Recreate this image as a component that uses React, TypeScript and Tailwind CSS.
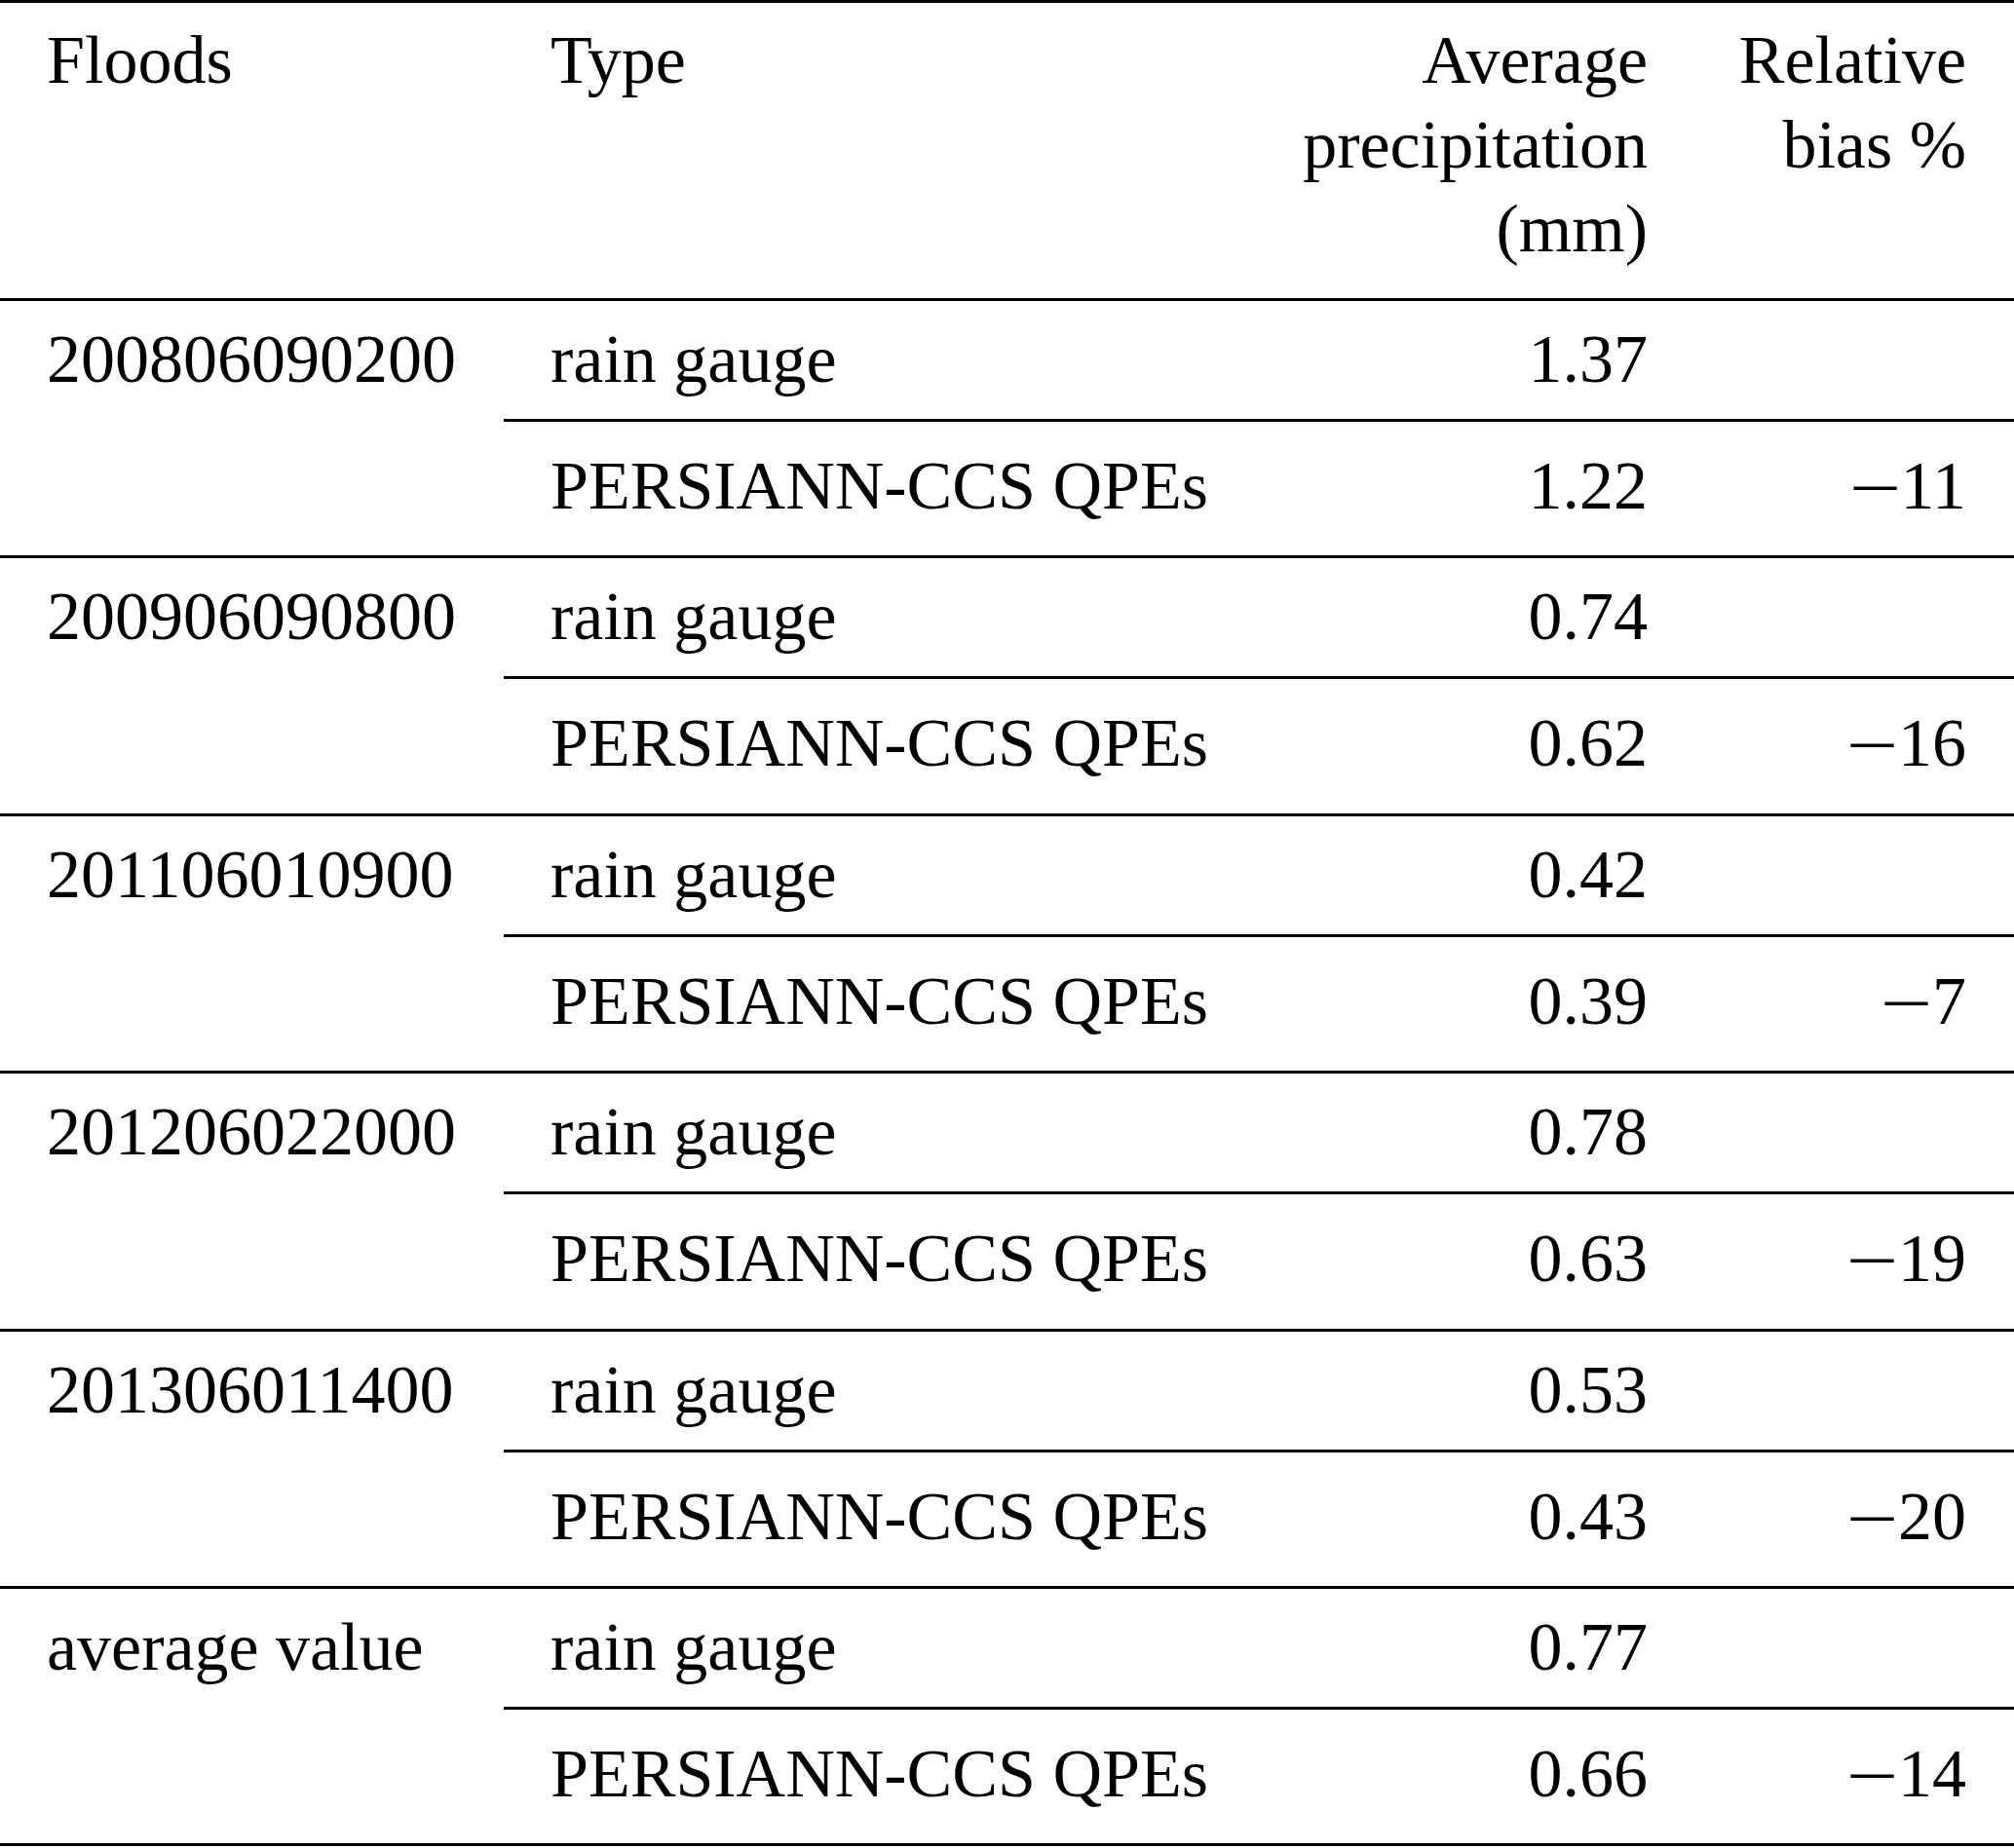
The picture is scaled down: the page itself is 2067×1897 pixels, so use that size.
const groups = [
  { flood: "200806090200", gauge: "1.37", qpe: "1.22", bias: "11" },
  { flood: "200906090800", gauge: "0.74", qpe: "0.62", bias: "16" },
  { flood: "201106010900", gauge: "0.42", qpe: "0.39", bias: "7" },
  { flood: "201206022000", gauge: "0.78", qpe: "0.63", bias: "19" },
  { flood: "201306011400", gauge: "0.53", qpe: "0.43", bias: "20" },
  { flood: "average value", gauge: "0.77", qpe: "0.66", bias: "14" },
];

// Horizontal rule across the full table
const Rule = () => <div className="h-[3px] bg-black" />;

const SubRow = ({ type, value, bias, className }: { type: string; value: string; bias?: string; className: string }) => (
  <div className={`grid grid-cols-[773px_449px_328px] ${className}`}>
    <div className="pl-[48px] whitespace-nowrap">{type}</div>
    <div className="pr-[48px] text-right">{value}</div>
    <div className="pr-[49px] text-right whitespace-nowrap">
      {bias && (
        <>
          {/* math minus: a bit longer and higher than the text dash */}
          <span className="mr-[13px] inline-block origin-left -translate-y-[4px] scale-x-[1.23]">–</span>
          {bias}
        </>
      )}
    </div>
  </div>
);

export default function App() {
  return (
    <div className="w-[2067px] bg-white text-black font-['Liberation_Serif',serif] text-[70px] leading-[86.5px]">
      <Rule />
      <div className="grid h-[303px] grid-cols-[517px_773px_449px_328px] pt-[16px]">
        <div className="pl-[48px]">Floods</div>
        <div className="pl-[48px]">Type</div>
        <div className="pr-[48px] text-right">
          Average
          <br />
          precipitation
          <br />
          (mm)
        </div>
        <div className="pr-[49px] text-right">
          Relative
          <br />
          bias %
        </div>
      </div>
      <Rule />
      {groups.map((g) => (
        <div key={g.flood}>
          <div className="flex">
            <div className="w-[517px] shrink-0 pl-[48px] pt-[17px] whitespace-nowrap">{g.flood}</div>
            <div className="flex flex-1 flex-col">
              <SubRow type="rain gauge" value={g.gauge} className="h-[121px] pt-[17px]" />
              <div className="h-[3px] bg-black" />
              <SubRow type="PERSIANN-CCS QPEs" value={g.qpe} bias={g.bias} className="h-[137.4px] pt-[23px]" />
            </div>
          </div>
          <Rule />
        </div>
      ))}
    </div>
  );
}
